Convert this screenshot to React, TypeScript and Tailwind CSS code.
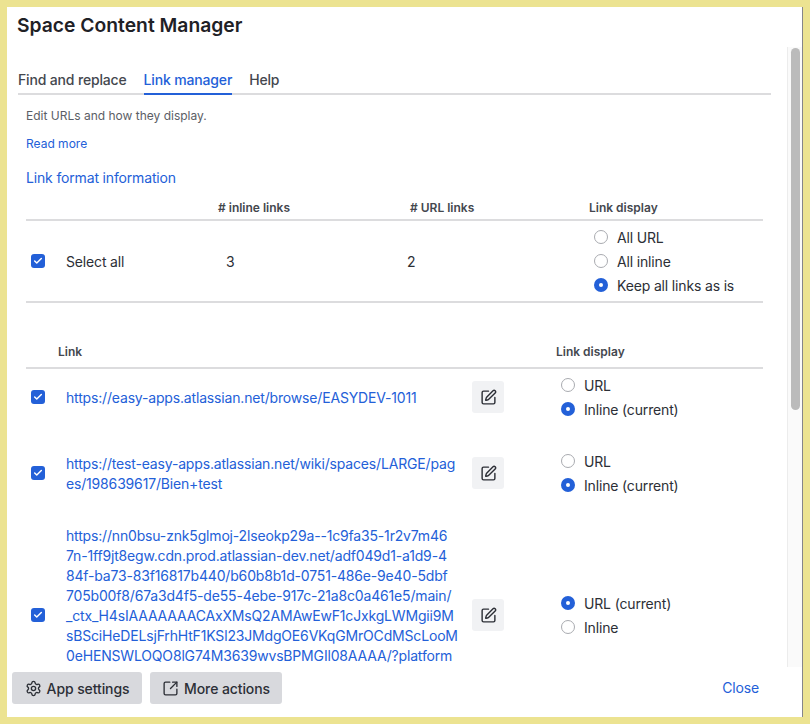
import { Check, Settings, SquareArrowOutUpRight, SquarePen } from "lucide-react";

const FONT = "font-['Inter','Liberation_Sans',sans-serif]";

function Checkbox() {
  return (
    <span className="flex h-[14px] w-[14px] items-center justify-center rounded-[3px] bg-[#2360d8]">
      <Check size={10} strokeWidth={3.5} className="text-white" />
    </span>
  );
}

function Radio({ label, checked }: { label: string; checked?: boolean }) {
  return (
    <div className="flex h-6 items-center gap-[9px] text-[14px] tracking-[-0.16px] text-[#2c2f36]">
      {checked ? (
        <span className="flex h-[14px] w-[14px] items-center justify-center rounded-full bg-[#2360d8]">
          <span className="h-1 w-1 rounded-full bg-white" />
        </span>
      ) : (
        <span className="h-[14px] w-[14px] rounded-full border border-[#a9abb0] bg-white" />
      )}
      <span>{label}</span>
    </div>
  );
}

function EditButton() {
  return (
    <button className="flex h-8 w-8 items-center justify-center rounded-[3px] bg-[#f1f2f4] text-[#2c2f36]">
      <SquarePen size={17} strokeWidth={2} />
    </button>
  );
}

function LinkRow({
  lines,
  radios,
  className,
  linkClassName = "",
}: {
  lines: string[];
  radios: { label: string; checked?: boolean }[];
  className: string;
  linkClassName?: string;
}) {
  return (
    <div className={`flex items-center ${className}`}>
      <div className="w-10 shrink-0 pl-[5px]">
        <Checkbox />
      </div>
      <a className={`w-[406px] shrink-0 text-[14px] leading-5 tracking-[-0.17px] text-[#2360d8] ${linkClassName}`}>
        {lines.map((l) => (
          <div key={l} className="whitespace-nowrap">
            {l}
          </div>
        ))}
      </a>
      <div className="w-[89px] shrink-0">
        <EditButton />
      </div>
      <div>
        {radios.map((r) => (
          <Radio key={r.label} label={r.label} checked={r.checked} />
        ))}
      </div>
    </div>
  );
}

function Footer() {
  return (
    <div className="flex h-[50px] shrink-0 items-start justify-between pl-[5px] pr-[43px] pt-[5px]">
      <div className="flex gap-2">
        <button className="flex h-8 w-[130px] items-center justify-center gap-[5px] rounded-[3px] bg-[#d8d9dd] text-[14px] font-medium tracking-[-0.1px] text-[#2c2f36]">
          <Settings size={17} strokeWidth={1.9} />
          App settings
        </button>
        <button className="flex h-8 w-[132px] items-center justify-center gap-[5px] rounded-[3px] bg-[#d8d9dd] text-[14px] font-medium tracking-[-0.1px] text-[#2c2f36]">
          <SquareArrowOutUpRight size={17} strokeWidth={1.9} />
          More actions
        </button>
      </div>
      <a className="mt-[7px] text-[14px] leading-[18px] tracking-[-0.16px] text-[#2360d8]">Close</a>
    </div>
  );
}

export default function App() {
  return (
    <div className={`h-[724px] w-[810px] overflow-hidden bg-[#ece391] p-[7px] ${FONT}`}>
      <div className="flex h-[710px] w-[796px] flex-col border-r border-[#85858a] bg-white">
        <h1 className="h-10 shrink-0 pl-[10px] pt-[6px] text-[19.3px] font-semibold leading-6 text-[#1f2126]">
          Space Content Manager
        </h1>
        <div className="flex h-[620px] shrink-0">
          <div className="w-[780px] shrink-0 overflow-hidden pl-[11px]">
            {/* tabs */}
            <div className="flex h-[48px] w-[753px] items-end gap-[17px] border-b-2 border-[#dcdcde] text-[14px] font-medium tracking-[-0.16px] text-[#44474e]">
              <span className="pb-[3px] leading-5">Find and replace</span>
              <span className="-mb-[2px] border-b-2 border-[#2360d8] pb-[3px] leading-5 text-[#2360d8]">Link manager</span>
              <span className="pb-[3px] leading-5">Help</span>
            </div>

            <div className="w-[745px] pl-2">
              <p className="mt-[13px] text-[12px] leading-4 text-[#5b5e66]">Edit URLs and how they display.</p>
              <a className="mt-3 block text-[12px] leading-4 text-[#2360d8]">Read more</a>
              <a className="mt-4 block text-[14px] leading-5 tracking-[-0.16px] text-[#2360d8]">Link format information</a>

              {/* summary table */}
              <div className="mt-3 flex h-[21px] items-start border-b-2 border-[#dcdcde] text-[12px] font-semibold leading-4 text-[#44474e]">
                <span className="ml-[192px] w-[192px]"># inline links</span>
                <span className="w-[179px]"># URL links</span>
                <span>Link display</span>
              </div>
              <div className="flex h-[82px] items-center border-b-2 border-[#dcdcde] text-[14px] tracking-[-0.16px] text-[#2c2f36]">
                <div className="w-10 shrink-0 pl-[5px]">
                  <Checkbox />
                </div>
                <span className="w-[160px]">Select all</span>
                <span className="w-[181px]">3</span>
                <span className="w-[187px]">2</span>
                <div>
                  <Radio label="All URL" />
                  <Radio label="All inline" />
                  <Radio label="Keep all links as is" checked />
                </div>
              </div>

              {/* links table */}
              <div className="mt-[41px] flex h-[25px] items-start border-b-2 border-[#dcdcde] text-[12px] font-semibold leading-4 text-[#44474e]">
                <span className="ml-8 w-[498px]">Link</span>
                <span>Link display</span>
              </div>
              <LinkRow
                className="h-[56px]"
                linkClassName="pt-[2px]"
                lines={["https://easy-apps.atlassian.net/browse/EASYDEV-1011"]}
                radios={[{ label: "URL" }, { label: "Inline (current)", checked: true }]}
              />
              <LinkRow
                className="mt-[20px] h-[56px]"
                linkClassName="pt-[2px]"
                lines={["https://test-easy-apps.atlassian.net/wiki/spaces/LARGE/pag", "es/198639617/Bien+test"]}
                radios={[{ label: "URL" }, { label: "Inline (current)", checked: true }]}
              />
              {/* the rest of this url is below the fold */}
              <LinkRow
                className="mt-[25px] h-[178px]"
                linkClassName="pb-[38px]"
                lines={[
                  "https://nn0bsu-znk5glmoj-2lseokp29a--1c9fa35-1r2v7m46",
                  "7n-1ff9jt8egw.cdn.prod.atlassian-dev.net/adf049d1-a1d9-4",
                  "84f-ba73-83f16817b440/b60b8b1d-0751-486e-9e40-5dbf",
                  "705b00f8/67a3d4f5-de55-4ebe-917c-21a8c0a461e5/main/",
                  "_ctx_H4sIAAAAAAACAxXMsQ2AMAwEwF1cJxkgLWMgii9M",
                  "sBSciHeDELsjFrhHtF1KSl23JMdgOE6VKqGMrOCdMScLooM",
                  "0eHENSWLOQO8lG74M3639wvsBPMGIl08AAAA/?platform",
                ]}
                radios={[{ label: "URL (current)", checked: true }, { label: "Inline" }]}
              />
            </div>
          </div>
          <div className="w-[15px] shrink-0 border-l border-[#ececec] bg-[#fafafa] pl-[3px] pr-[2px] pt-[1px]">
            <div className="h-[362px] w-[9px] rounded-full bg-[#bbbbbb]" />
          </div>
        </div>
        <Footer />
      </div>
    </div>
  );
}
